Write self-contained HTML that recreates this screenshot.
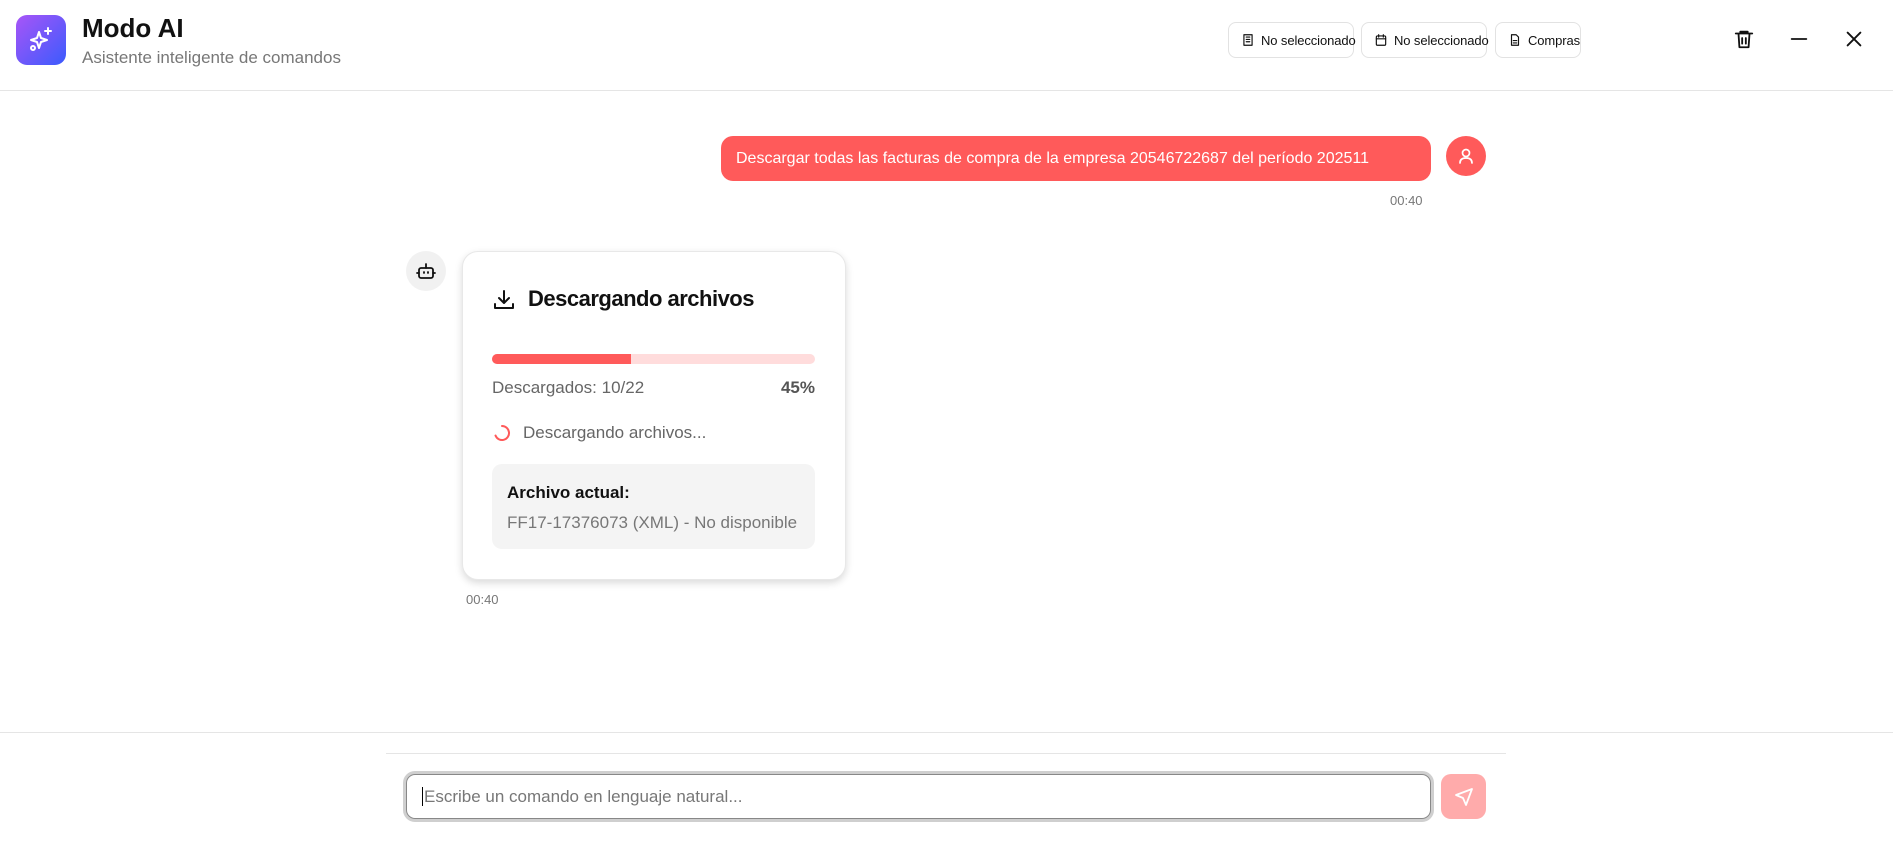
<!DOCTYPE html>
<html><head><meta charset="utf-8"><style>
*{box-sizing:border-box;margin:0;padding:0}
body{width:1893px;height:853px;background:#fff;font-family:"Liberation Sans",sans-serif;position:relative;overflow:hidden;color:#111}
.a{position:absolute}
.btn{position:absolute;top:22px;height:36px;border:1px solid #e2e2e2;border-radius:8px;font-size:13px;display:flex;align-items:center;padding-left:12px;gap:6px;color:#111;white-space:nowrap;letter-spacing:-0.1px}
.btn svg{flex-shrink:0}
.ic{stroke:#111;fill:none;stroke-width:2;stroke-linecap:round;stroke-linejoin:round}
</style></head><body>
<div class="a" style="left:16px;top:15px;width:50px;height:50px;border-radius:11px;background:linear-gradient(135deg,#a855f7,#3b5bfd)">
<svg width="50" height="50" viewBox="0 0 50 50" class="ic" style="stroke:#fff"><path d="M23 17 L25 23 L31 25 L25 27 L23 33 L21 27 L15 25 L21 23 Z" stroke-width="2"/><path d="M32 13v6M29 16h6"/><circle cx="17" cy="33" r="2"/></svg></div>
<div class="a" style="left:82px;top:13px;font-size:26px;font-weight:bold">Modo AI</div>
<div class="a" style="left:82px;top:48px;font-size:17px;color:#777">Asistente inteligente de comandos</div>
<div class="btn" style="left:1228px;width:126px"><svg width="14" height="14" viewBox="0 0 24 24" class="ic"><rect x="5" y="3" width="14" height="18"/><path d="M9 7h6M9 11h6M9 15h6"/></svg>No seleccionado</div>
<div class="btn" style="left:1361px;width:126px"><svg width="14" height="14" viewBox="0 0 24 24" class="ic"><rect x="4" y="5" width="16" height="16" rx="2"/><path d="M8 3v4M16 3v4M4 10h16"/></svg>No seleccionado</div>
<div class="btn" style="left:1495px;width:86px"><svg width="14" height="14" viewBox="0 0 24 24" class="ic"><path d="M14 3H6v18h12V7z"/><path d="M9 13h6M9 17h6"/></svg>Compras</div>
<svg class="a ic" style="left:1733px;top:28px" width="22" height="22" viewBox="0 0 24 24"><path d="M3 6h18M8 6V4h8v2M6 6l1 15h10l1-15M10 11v6M14 11v6"/></svg>
<svg class="a ic" style="left:1788px;top:28px" width="22" height="22" viewBox="0 0 24 24"><path d="M4 12h16"/></svg>
<svg class="a ic" style="left:1843px;top:28px" width="22" height="22" viewBox="0 0 24 24"><path d="M5 5l14 14M19 5L5 19"/></svg>
<div class="a" style="left:0;top:90px;width:1893px;height:1px;background:#e5e5e5"></div>

<div class="a" style="left:721px;top:136px;width:710px;height:45px;background:#ff5a5a;border-radius:12px;color:#fff;font-size:16px;line-height:45px;padding-left:15px;white-space:nowrap">Descargar todas las facturas de compra de la empresa 20546722687 del período 202511</div>
<div class="a" style="left:1446px;top:136px;width:40px;height:40px;border-radius:50%;background:#ff5a5a"><svg width="40" height="40" viewBox="0 0 40 40" class="ic" style="stroke:#fff;stroke-width:1.7"><circle cx="20" cy="17" r="3.5"/><path d="M14 27c0-4 3-5 6-5s6 1 6 5"/></svg></div>
<div class="a" style="left:1390px;top:193px;font-size:13px;color:#777">00:40</div>

<div class="a" style="left:406px;top:251px;width:40px;height:40px;border-radius:50%;background:#f1f1f1"><svg width="40" height="40" viewBox="0 0 40 40" class="ic" style="stroke-width:1.8"><rect x="13" y="17" width="14" height="10" rx="2"/><path d="M20 13v4M18 21v1M22 21v1M11 22h2M27 22h2"/></svg></div>
<div class="a" style="left:462px;top:251px;width:384px;height:329px;border:1px solid #e8e8e8;border-radius:16px;box-shadow:0 3px 8px rgba(0,0,0,.15);background:#fff"></div>
<svg class="a ic" style="left:492px;top:288px" width="24" height="24" viewBox="0 0 24 24"><path d="M12 3v12M7 10l5 5 5-5M3 16v4h18v-4"/></svg>
<div class="a" style="left:528px;top:286px;font-size:22px;font-weight:bold;letter-spacing:-0.5px">Descargando archivos</div>
<div class="a" style="left:492px;top:354px;width:323px;height:10px;border-radius:5px;background:#ffdcdc;overflow:hidden"><div style="width:139px;height:10px;background:#ff5a5a"></div></div>
<div class="a" style="left:492px;top:378px;font-size:17px;color:#666">Descargados: 10/22</div>
<div class="a" style="left:770px;top:378px;width:45px;text-align:right;font-size:17px;color:#555;font-weight:bold">45%</div>
<svg class="a" style="left:493px;top:424px" width="18" height="18" viewBox="0 0 18 18"><path d="M9 2a7 7 0 1 1-6.5 9.5" fill="none" stroke="#ff5a5a" stroke-width="2" stroke-linecap="round"/></svg>
<div class="a" style="left:523px;top:423px;font-size:17px;color:#666">Descargando archivos...</div>
<div class="a" style="left:492px;top:464px;width:323px;height:85px;border-radius:10px;background:#f4f4f4"></div>
<div class="a" style="left:507px;top:483px;font-size:17px;font-weight:bold">Archivo actual:</div>
<div class="a" style="left:507px;top:513px;font-size:17px;color:#777">FF17-17376073 (XML) - No disponible</div>
<div class="a" style="left:466px;top:592px;font-size:13px;color:#777">00:40</div>

<div class="a" style="left:0;top:732px;width:1893px;height:1px;background:#e5e5e5"></div>
<div class="a" style="left:386px;top:753px;width:1120px;height:1px;background:#e5e5e5"></div>
<div class="a" style="left:403px;top:771px;width:1031px;height:51px;border:3px solid #cfcfcf;border-radius:12px"></div>
<div class="a" style="left:406px;top:774px;width:1025px;height:45px;border:1px solid #888;border-radius:9px;background:#fff;font-size:17px;color:#777;line-height:43px;padding-left:15px;white-space:nowrap"><span style="border-left:1px solid #000;margin-right:1px"></span>Escribe un comando en lenguaje natural...</div>
<div class="a" style="left:1441px;top:774px;width:45px;height:45px;border-radius:10px;background:#ffabab"><svg width="45" height="45" viewBox="0 0 45 45" class="ic" style="stroke:#fff;stroke-width:1.8"><path d="M15 21l16-6-6 16-3-7z"/></svg></div>
</body></html>
